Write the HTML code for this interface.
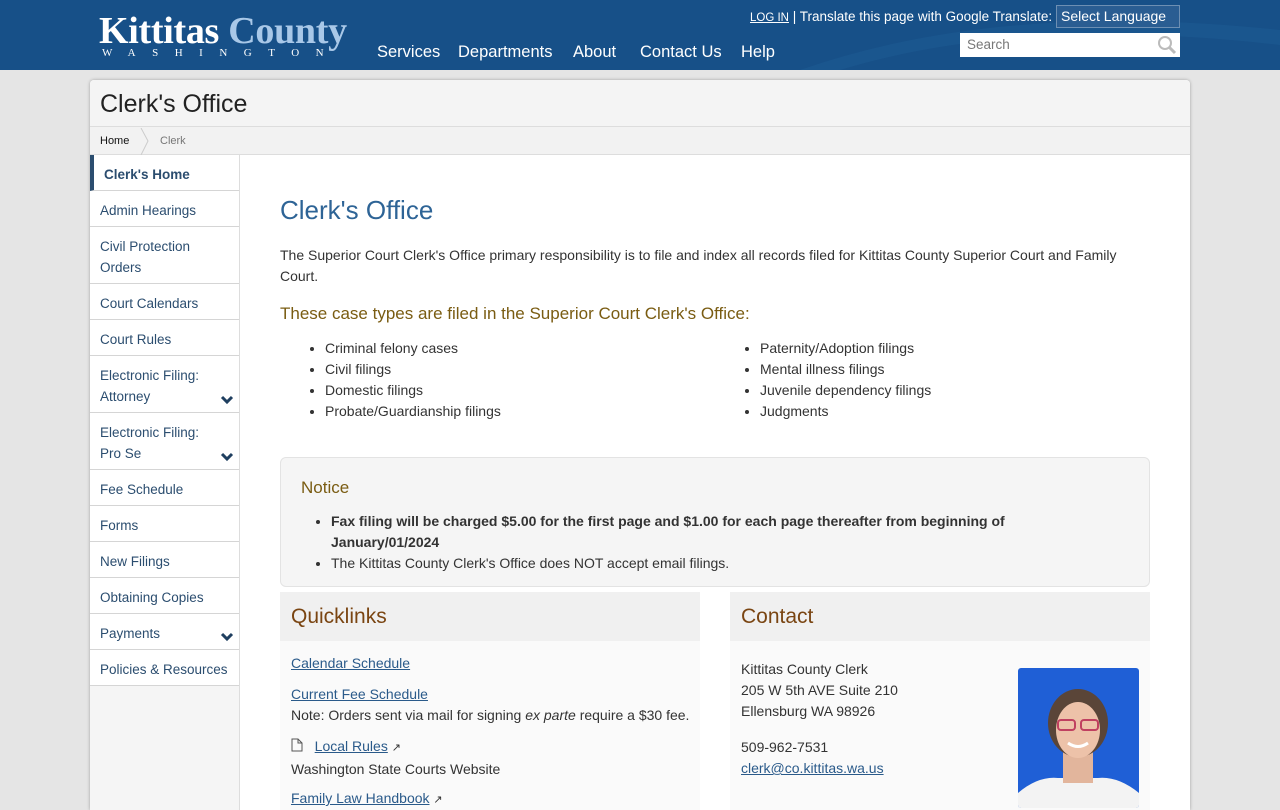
<!DOCTYPE html>
<html><head><meta charset="utf-8"><style>
*{box-sizing:border-box;margin:0;padding:0}
body{width:1280px;height:800px;overflow:hidden;background:#e5e5e5;font-family:"Liberation Sans",sans-serif;color:#333;font-size:14px;position:relative}
.a{position:absolute}
a{color:#2a5a8a;text-decoration:underline}
#hdr{left:0;top:0;width:1280px;height:70px;background:#175088;overflow:hidden}
.nav{color:#fff;font-size:16.5px;top:43px}
#card{left:90px;top:80px;width:1100px;height:730px;background:#fff;box-shadow:0 0 3px rgba(0,0,0,.3);border-radius:4px 4px 0 0;overflow:hidden}
.side div{position:absolute;left:0;width:149px;border-bottom:1px solid #d5d5d5;padding:9px 10px 7px;line-height:21px;color:#2b4d6f;font-size:13.5px}
.chev{position:absolute;right:5px;bottom:7px}
ul{list-style:disc}
li{line-height:21px}
</style></head><body>
<div id="hdr" class="a">
 <svg class="a" style="left:700px;top:0" width="580" height="70"><path d="M100 70 Q300 0 580 30 L580 45 Q320 15 140 70Z" fill="#1d5a93" opacity=".6"/></svg>
 <div class="a" style="left:99px;top:11px;font-family:'Liberation Serif',serif;font-weight:bold;font-size:38px;line-height:40px;color:#fff;letter-spacing:-.3px">Kittitas <span style="color:#a9c8e8">County</span></div>
 <div class="a" style="left:102px;top:47px;font-family:'Liberation Serif',serif;font-size:11px;color:#fff;letter-spacing:16.5px">WASHINGTON</div>
 <div class="a nav" style="left:377px">Services</div>
 <div class="a nav" style="left:458px">Departments</div>
 <div class="a nav" style="left:573px">About</div>
 <div class="a nav" style="left:640px">Contact Us</div>
 <div class="a nav" style="left:741px">Help</div>
 <div class="a" style="left:750px;top:9px;color:#fff;font-size:13.5px;white-space:nowrap"><u style="font-size:11.5px">LOG IN</u> | Translate this page with Google Translate:</div>
 <div class="a" style="left:1056px;top:5px;width:124px;height:23px;background:#2a5d92;border:1px solid #6d8fb3;color:#fff;font-size:14px;padding:2px 4px">Select Language ⌄</div>
 <div class="a" style="left:960px;top:33px;width:220px;height:24px;background:#fff;color:#777;font-size:13.5px;padding:4px 7px">Search
  <svg class="a" style="right:2px;top:2px" width="22" height="20"><circle cx="9" cy="8" r="6" fill="none" stroke="#bbb" stroke-width="2"/><path d="M13 12 L19 18" stroke="#bbb" stroke-width="3"/></svg></div>
</div>
<div id="card" class="a">
 <div class="a" style="left:0;top:0;width:1100px;height:47px;background:#f4f4f4;border-bottom:1px solid #ddd"></div>
 <div class="a" style="left:10px;top:10px;font-size:25px;color:#222">Clerk's Office</div>
 <div class="a" style="left:0;top:47px;width:1100px;height:28px;background:#f2f2f2;border-bottom:1px solid #ddd"></div>
 <div class="a" style="left:10px;top:55px;font-size:11px;color:#111">Home</div>
 <svg class="a" style="left:50px;top:48px" width="10" height="27"><path d="M1 0 L8 13 L1 27" fill="none" stroke="#ccc"/></svg>
 <div class="a" style="left:70px;top:55px;font-size:11px;color:#777">Clerk</div>
 <div class="a side" style="left:0;top:75px;width:150px;height:660px;background:#f5f5f5;border-right:1px solid #ddd">
  <div style="top:0;height:36px;background:#fff;border-left:4px solid #2b4d6f;font-weight:bold;padding-left:10px">Clerk's Home</div>
  <div style="top:36px;height:36px;background:#fff">Admin Hearings</div>
  <div style="top:72px;height:57px;background:#fff">Civil Protection<br>Orders</div>
  <div style="top:129px;height:36px;background:#fff">Court Calendars</div>
  <div style="top:165px;height:36px;background:#fff">Court Rules</div>
  <div style="top:201px;height:57px;background:#fff">Electronic Filing:<br>Attorney<svg class="chev" width="14" height="10"><path d="M2 2 L7 7 L12 2" fill="none" stroke="#1f3f60" stroke-width="3"/></svg></div>
  <div style="top:258px;height:57px;background:#fff">Electronic Filing:<br>Pro Se<svg class="chev" width="14" height="10"><path d="M2 2 L7 7 L12 2" fill="none" stroke="#1f3f60" stroke-width="3"/></svg></div>
  <div style="top:315px;height:36px;background:#fff">Fee Schedule</div>
  <div style="top:351px;height:36px;background:#fff">Forms</div>
  <div style="top:387px;height:36px;background:#fff">New Filings</div>
  <div style="top:423px;height:36px;background:#fff">Obtaining Copies</div>
  <div style="top:459px;height:36px;background:#fff">Payments<svg class="chev" width="14" height="10"><path d="M2 2 L7 7 L12 2" fill="none" stroke="#1f3f60" stroke-width="3"/></svg></div>
  <div style="top:495px;height:36px;background:#fff">Policies &amp; Resources</div>
 </div>
 <div class="a" style="left:190px;top:115px;font-size:26px;color:#2e6496">Clerk's Office</div>
 <div class="a" style="left:190px;top:165px;width:850px;line-height:21px">The Superior Court Clerk's Office primary responsibility is to file and index all records filed for Kittitas County Superior Court and Family Court.</div>
 <div class="a" style="left:190px;top:224px;font-size:17px;color:#7a5c12">These case types are filed in the Superior Court Clerk's Office:</div>
 <ul class="a" style="left:235px;top:258px"><li>Criminal felony cases</li><li>Civil filings</li><li>Domestic filings</li><li>Probate/Guardianship filings</li></ul>
 <ul class="a" style="left:670px;top:258px"><li>Paternity/Adoption filings</li><li>Mental illness filings</li><li>Juvenile dependency filings</li><li>Judgments</li></ul>
 <div class="a" style="left:190px;top:377px;width:870px;height:130px;background:#f5f5f5;border:1px solid #e3e3e3;border-radius:6px"></div>
 <div class="a" style="left:211px;top:398px;font-size:17px;color:#7a5c12">Notice</div>
 <ul class="a" style="left:241px;top:431px;width:720px"><li><b>Fax filing will be charged $5.00 for the first page and $1.00 for each page thereafter from beginning of January/01/2024</b></li><li>The Kittitas County Clerk's Office does NOT accept email filings.</li></ul>
 <div class="a" style="left:190px;top:512px;width:420px;height:230px;background:#fafafa"></div>
 <div class="a" style="left:190px;top:512px;width:420px;height:49px;background:#f0f0f0"></div>
 <div class="a" style="left:201px;top:525px;font-size:21px;color:#7a4512">Quicklinks</div>
 <div class="a" style="left:201px;top:573px;line-height:21px"><a>Calendar Schedule</a></div>
 <div class="a" style="left:201px;top:604px;line-height:21px"><a>Current Fee Schedule</a><br>Note: Orders sent via mail for signing <i>ex parte</i> require a $30 fee.</div>
 <div class="a" style="left:201px;top:656px;line-height:21px"><svg width="12" height="14" style="vertical-align:-1px"><path d="M1 1 H7 L11 5 V13 H1Z M7 1 V5 H11" fill="none" stroke="#555"/></svg> &nbsp;&nbsp;<a>Local Rules</a> <span style="font-size:11px">↗</span><br>Washington State Courts Website</div>
 <div class="a" style="left:201px;top:708px;line-height:21px"><a>Family Law Handbook</a> <span style="font-size:11px">↗</span></div>
 <div class="a" style="left:640px;top:512px;width:420px;height:230px;background:#fafafa"></div>
 <div class="a" style="left:640px;top:512px;width:420px;height:49px;background:#f0f0f0"></div>
 <div class="a" style="left:651px;top:525px;font-size:21px;color:#7a4512">Contact</div>
 <div class="a" style="left:651px;top:579px;line-height:21px">Kittitas County Clerk<br>205 W 5th AVE Suite 210<br>Ellensburg WA 98926</div>
 <div class="a" style="left:651px;top:657px;line-height:21px">509-962-7531<br><a>clerk@co.kittitas.wa.us</a></div>
 <div class="a" style="left:928px;top:588px;width:121px;height:140px;background:#1f5fd6;border-radius:3px;overflow:hidden">
  <svg width="121" height="140"><path d="M0 125 Q20 108 40 110 L80 110 Q100 108 121 125 L121 140 L0 140Z" fill="#f3f3f3"/><rect x="45" y="80" width="30" height="35" fill="#e2b59c"/><ellipse cx="60" cy="55" rx="30" ry="34" fill="#5a4538"/><ellipse cx="60" cy="62" rx="22" ry="28" fill="#edc2a9"/><rect x="40" y="52" width="17" height="10" rx="3" fill="none" stroke="#c04060" stroke-width="2"/><rect x="63" y="52" width="17" height="10" rx="3" fill="none" stroke="#c04060" stroke-width="2"/><path d="M50 75 Q60 82 70 75" stroke="#fff" stroke-width="3" fill="none"/></svg>
 </div>
</div>
</body></html>
